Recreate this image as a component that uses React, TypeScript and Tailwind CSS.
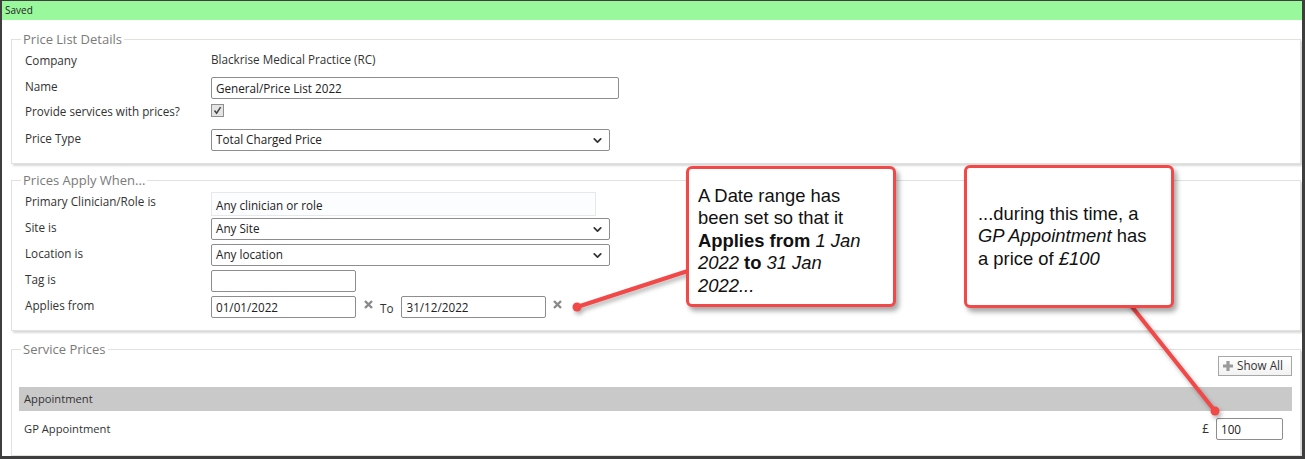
import { ChevronDown } from "lucide-react";
import type { ReactNode } from "react";

const ui = { fontFamily: '"Open Sans", "Noto Sans", sans-serif' };
const callout = { fontFamily: '"Liberation Sans", Arial, sans-serif' };

function Label({ children }: { children: ReactNode }) {
  return <div className="w-[186px] shrink-0 text-[11.7px] leading-[18px] text-[#333]">{children}</div>;
}

function TextBox({ value, className = "" }: { value?: string; className?: string }) {
  return (
    <div
      className={`h-[22px] shrink-0 rounded-[2px] border border-[#8d8d8d] bg-white px-[4px] text-[11.7px] leading-[20px] text-[#222] ${className}`}
    >
      {value}
    </div>
  );
}

function Select({ value, className = "" }: { value: string; className?: string }) {
  return (
    <div
      className={`flex h-[22px] shrink-0 items-center justify-between rounded-[2px] border border-[#8d8d8d] bg-white pl-[4px] pr-[5px] text-[11.7px] text-[#222] ${className}`}
    >
      <span>{value}</span>
      <ChevronDown size={13} strokeWidth={3.2} className="text-[#333]" />
    </div>
  );
}

function ClearIcon() {
  return (
    <svg width="9" height="9" viewBox="0 0 9 9" className="mt-[4px] shrink-0">
      <path d="M1 1 L8 8 M8 1 L1 8" stroke="#8a8a8a" strokeWidth="2.4" />
    </svg>
  );
}

function Section({ title, children, className = "" }: { title: string; children: ReactNode; className?: string }) {
  return (
    <fieldset
      className={`ml-[9px] mr-px border border-[#e2e2dc] shadow-[2px_2px_2px_#d9d9d9] ${className}`}
    >
      <legend className="ml-[9px] px-[2px] text-[13px] leading-[17px] text-[#7a7a7a]">{title}</legend>
      {children}
    </fieldset>
  );
}

export default function App() {
  return (
    <div className="relative h-[459px] w-[1305px] bg-[#3e3e3e] pb-[3px] pl-[2px] pr-[3px] pt-px" style={ui}>
      <div className="flex h-full flex-col overflow-hidden bg-white">
        <div className="h-[19px] shrink-0 bg-[#9af89c] pl-[3px] text-[10px] leading-[19px] text-[#222]">Saved</div>

        <Section title="Price List Details" className="mt-[11px]">
          <div className="pb-[12px] pl-[13px]">
            <div className="mt-[1px] flex h-[22px] items-center">
              <Label>Company</Label>
              <span className="text-[11.7px] text-[#333]">Blackrise Medical Practice (RC)</span>
            </div>
            <div className="mt-[6px] flex items-start">
              <Label>Name</Label>
              <TextBox value="General/Price List 2022" className="w-[408px]" />
            </div>
            <div className="mt-[3px] flex h-[16px] items-start">
              <Label>Provide services with prices?</Label>
              <div className="mt-[2px] flex h-[13px] w-[13px] items-center justify-center border border-[#8f8f8f] bg-[#e4e4e4]">
                <svg width="9" height="9" viewBox="0 0 9 9">
                  <path d="M1.5 4.5 L3.6 7.2 L7.6 1.2" fill="none" stroke="#444" strokeWidth="1.5" />
                </svg>
              </div>
            </div>
            <div className="mt-[11px] flex items-start">
              <Label>Price Type</Label>
              <Select value="Total Charged Price" className="w-[399px]" />
            </div>
          </div>
        </Section>

        <Section title="Prices Apply When..." className="mt-[8px]">
          <div className="pb-[10px] pl-[13px]">
            <div className="mt-[3px] flex items-start">
              <Label>Primary Clinician/Role is</Label>
              <div className="h-[24px] w-[385px] border border-[#e6e8ea] bg-[#fcfdff] px-[4px] text-[11.7px] leading-[24px] text-[#222]">
                Any clinician or role
              </div>
            </div>
            <div className="mt-[2px] flex items-start">
              <Label>Site is</Label>
              <Select value="Any Site" className="h-[21px] w-[399px]" />
            </div>
            <div className="mt-[4px] flex items-start">
              <Label>Location is</Label>
              <Select value="Any location" className="h-[21px] w-[399px]" />
            </div>
            <div className="mt-[4px] flex items-start">
              <Label>Tag is</Label>
              <TextBox className="w-[145px]" />
            </div>
            <div className="mt-[4px] flex items-start">
              <Label>Applies from</Label>
              <TextBox value="01/01/2022" className="w-[145px]" />
              <div className="ml-[8px]">
                <ClearIcon />
              </div>
              <span className="ml-[7px] mr-[8px] text-[11.7px] leading-[24px] text-[#333]">To</span>
              <TextBox value="31/12/2022" className="w-[145px]" />
              <div className="ml-[7px]">
                <ClearIcon />
              </div>
            </div>
          </div>
        </Section>

        <Section title="Service Prices" className="mt-[10px] flex-1">
          <div className="-mt-[2px] flex justify-end pr-[8px]">
            <div className="flex h-[20px] w-[74px] items-center gap-[3px] border border-[#a6a6a6] bg-gradient-to-b from-white to-[#f2f2f2] pl-[3px] text-[11.7px] text-[#333]">
              <svg width="12" height="12" viewBox="0 0 12 12">
                <path d="M6 1 V11 M1 6 H11" stroke="#9a9a9a" strokeWidth="3.2" />
              </svg>
              Show All
            </div>
          </div>
          <div className="ml-[7px] mr-[8px] mt-[11px] h-[24px] bg-[#c9c9c9] pl-[5px] text-[11.2px] leading-[24px] text-[#333]">
            Appointment
          </div>
          <div className="ml-[7px] mr-[17px] mt-[7px] flex items-center">
            <span className="pl-[5px] text-[11.2px] text-[#333]">GP Appointment</span>
            <span className="ml-auto mr-[7px] text-[11.7px] text-[#333]">£</span>
            <TextBox value="100" className="w-[67px]" />
          </div>
        </Section>
      </div>

      <svg
        width="1305"
        height="459"
        className="pointer-events-none absolute left-0 top-0 drop-shadow-[2px_3px_2px_rgba(0,0,0,0.3)]"
      >
        <line x1="577" y1="307" x2="700" y2="267" stroke="#f24848" strokeWidth="4" strokeLinecap="round" />
        <circle cx="577" cy="307" r="4.5" fill="#f24848" />
        <line x1="1125" y1="298" x2="1215" y2="411" stroke="#f24848" strokeWidth="4" strokeLinecap="round" />
        <circle cx="1215" cy="411" r="4.5" fill="#f24848" />
      </svg>

      <div
        className="absolute left-[686px] top-[166px] h-[141px] w-[210px] rounded-[6px] border-[3px] border-[#f24848] bg-white pl-[9px] pt-[16px] text-[18.4px] leading-[22.4px] text-[#111] shadow-[3px_4px_5px_rgba(0,0,0,0.35)]"
        style={callout}
      >
        A Date range has
        <br />
        been set so that it
        <br />
        <b>Applies from</b> <i>1 Jan</i>
        <br />
        <i>2022</i> <b>to</b> <i>31 Jan</i>
        <br />
        <i>2022...</i>
      </div>

      <div
        className="absolute left-[964px] top-[165px] flex h-[143px] w-[210px] items-center rounded-[6px] border-[3px] border-[#f24848] bg-white pl-[11px] text-[18.4px] leading-[22.4px] text-[#111] shadow-[3px_4px_5px_rgba(0,0,0,0.35)]"
        style={callout}
      >
        <div>
          ...during this time, a
          <br />
          <i>GP Appointment</i> has
          <br />a price of <i>£100</i>
        </div>
      </div>
    </div>
  );
}
